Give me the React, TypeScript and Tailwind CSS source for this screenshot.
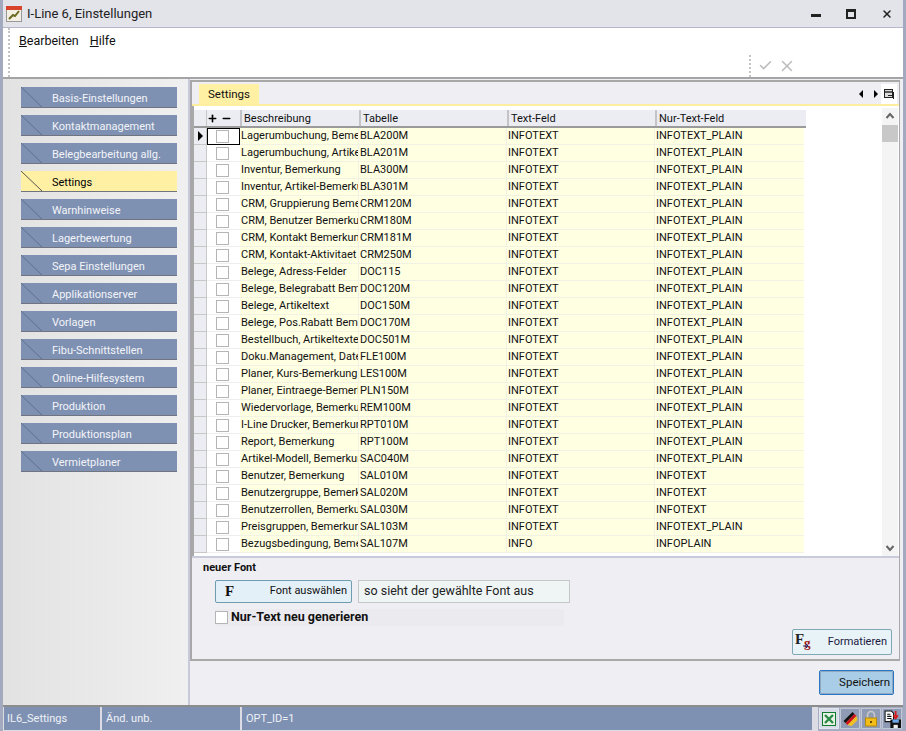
import { Check, Minus, Plus, X } from 'lucide-react'

const FONT = "font-['Roboto','Liberation_Sans',sans-serif]"

const NAV = [
  'Basis-Einstellungen',
  'Kontaktmanagement',
  'Belegbearbeitung allg.',
  'Settings',
  'Warnhinweise',
  'Lagerbewertung',
  'Sepa Einstellungen',
  'Applikationserver',
  'Vorlagen',
  'Fibu-Schnittstellen',
  'Online-Hilfesystem',
  'Produktion',
  'Produktionsplan',
  'Vermietplaner',
]

const ROWS: [string, string, string?, string?][] = [
  ['Lagerumbuchung, Bemerkung', 'BLA200M'],
  ['Lagerumbuchung, Artikeltext', 'BLA201M'],
  ['Inventur, Bemerkung', 'BLA300M'],
  ['Inventur, Artikel-Bemerkung', 'BLA301M'],
  ['CRM, Gruppierung Bemerkung', 'CRM120M'],
  ['CRM, Benutzer Bemerkung', 'CRM180M'],
  ['CRM, Kontakt Bemerkung', 'CRM181M'],
  ['CRM, Kontakt-Aktivitaet', 'CRM250M'],
  ['Belege, Adress-Felder', 'DOC115'],
  ['Belege, Belegrabatt Bemerkung', 'DOC120M'],
  ['Belege, Artikeltext', 'DOC150M'],
  ['Belege, Pos.Rabatt Bemerkung', 'DOC170M'],
  ['Bestellbuch, Artikeltexte', 'DOC501M'],
  ['Doku.Management, Datei', 'FLE100M'],
  ['Planer, Kurs-Bemerkung', 'LES100M'],
  ['Planer, Eintraege-Bemerkung', 'PLN150M'],
  ['Wiedervorlage, Bemerkung', 'REM100M'],
  ['I-Line Drucker, Bemerkung', 'RPT010M'],
  ['Report, Bemerkung', 'RPT100M'],
  ['Artikel-Modell, Bemerkung', 'SAC040M'],
  ['Benutzer, Bemerkung', 'SAL010M', 'INFOTEXT', 'INFOTEXT'],
  ['Benutzergruppe, Bemerkung', 'SAL020M', 'INFOTEXT', 'INFOTEXT'],
  ['Benutzerrollen, Bemerkung', 'SAL030M', 'INFOTEXT', 'INFOTEXT'],
  ['Preisgruppen, Bemerkung', 'SAL103M'],
  ['Bezugsbedingung, Bemerkung', 'SAL107M', 'INFO', 'INFOPLAIN'],
]

function NavButton({ label, active }: { label: string; active?: boolean }) {
  return (
    <div
      className={`relative h-[21px] w-[156px] border-b border-[#6f7480] pl-[31px] text-[11px] leading-[24px] ${
        active ? 'bg-[#fff0a4] text-black' : 'bg-[#7f91b3] text-[#f2f4f8]'
      }`}
    >
      <svg className="absolute left-0 top-0" width="21" height="20">
        <line x1="0" y1="0" x2="21" y2="20" stroke={active ? '#555' : '#5f6f90'} />
      </svg>
      {label}
    </div>
  )
}

function Row({ row, first }: { row: (typeof ROWS)[number]; first: boolean }) {
  const [name, table, text = 'INFOTEXT', plain = 'INFOTEXT_PLAIN'] = row
  return (
    <div className="flex h-[17px] text-[11px] leading-[16px] text-[#111]">
      <div className="flex w-[13px] shrink-0 items-center justify-center border-b border-r border-[#c8c8c8] bg-[#ecedf3]">
        {first && <div className="h-0 w-0 border-y-[5px] border-l-[5px] border-y-transparent border-l-black" />}
      </div>
      <div className={`flex w-[33px] shrink-0 items-center justify-center pr-[2px] bg-white ${first ? 'border border-black' : 'border-b border-[#eeeeee]'}`}>
        <div className="h-[13px] w-[13px] border border-[#b5b5b5] bg-white" />
      </div>
      <div className="w-[119px] shrink-0 overflow-hidden whitespace-nowrap border-b border-r border-[#f1f1e4] bg-[#ffffe2] pl-px">{name}</div>
      <div className="w-[148px] shrink-0 border-b border-r border-[#f1f1e4] bg-[#ffffe2] pl-px">{table}</div>
      <div className="w-[148px] shrink-0 border-b border-r border-[#f1f1e4] bg-[#ffffe2] pl-px">{text}</div>
      <div className="w-[149px] shrink-0 border-b border-[#f1f1e4] bg-[#ffffe2] pl-px">{plain}</div>
    </div>
  )
}

function HeadCell({ className, children }: { className: string; children: string }) {
  return <div className={`shrink-0 border-l-2 border-l-[#c4c4c8] pl-[2px] ${className}`}>{children}</div>
}

function Grid() {
  return (
    <div className="flex h-[450px] border-l-2 border-[#a8a8a8] bg-white pr-px pt-[4px]">
      <div className="w-[612px] shrink-0">
        <div className="flex h-[18px] border-b-2 border-[#9a9a9a] bg-[#ecedf3] text-[11px] leading-[17px] text-[#111]">
          <div className="w-[13px] shrink-0 border-r border-[#c8c8c8]" />
          <div className="flex w-[33px] shrink-0 items-center gap-[3px]">
            <Plus size={11} strokeWidth={3.5} className="text-black" />
            <Minus size={11} strokeWidth={3.5} className="text-black" />
          </div>
          <HeadCell className="w-[119px]">Beschreibung</HeadCell>
          <HeadCell className="w-[148px]">Tabelle</HeadCell>
          <HeadCell className="w-[148px]">Text-Feld</HeadCell>
          <HeadCell className="w-[149px]">Nur-Text-Feld</HeadCell>
        </div>
        {ROWS.map((r, i) => (
          <Row key={r[1]} row={r} first={i === 0} />
        ))}
      </div>
      <div className="flex-1" />
      <div className="-mt-[2px] flex w-[16px] shrink-0 flex-col items-center bg-[#f4f4f4] text-[#777]">
        <svg className="mt-[3px]" width="10" height="10" viewBox="0 0 10 10">
          <path d="M1.5 7 L5 3 L8.5 7" fill="none" stroke="#666" strokeWidth="2" />
        </svg>
        <div className="mt-[4px] h-[17px] w-full bg-[#c8c8c8]" />
        <div className="flex-1" />
        <svg className="mb-[3px]" width="10" height="10" viewBox="0 0 10 10">
          <path d="M1.5 3 L5 7 L8.5 3" fill="none" stroke="#666" strokeWidth="2" />
        </svg>
      </div>
    </div>
  )
}

function FormatIcon() {
  return (
    <svg width="22" height="20" viewBox="0 0 22 20">
      <text x="0" y="12" fontFamily="Liberation Serif" fontWeight="700" fontSize="15" fill="#222">F</text>
      <text x="9" y="15" fontFamily="Liberation Serif" fontWeight="700" fontSize="13" fill="#a01818">g</text>
      <path d="M8 14 h5 M11 12 l2 2 l-2 2" stroke="#26307a" fill="none" />
    </svg>
  )
}

function StatusIcons() {
  return (
    <div className="flex h-[24px] items-center gap-[1px] bg-[#a5aec4] px-[1px]">
      <span className="flex h-[21px] w-[20px] items-center justify-center border border-[#e4e6ee] bg-[#d8dce6]">
        <svg width="14" height="14" viewBox="0 0 14 14">
          <rect x="0.5" y="0.5" width="13" height="13" fill="#e8f3e6" stroke="#117a2e" />
          <path d="M3 3 L11 11 M11 3 L3 11" stroke="#2b8a45" strokeWidth="2.4" />
        </svg>
      </span>
      <span className="flex h-[21px] w-[20px] items-center justify-center border border-[#c2c7d6] bg-[#8f9ab4]">
        <svg width="17" height="16" viewBox="0 0 16 16">
          <path d="M1 10 L10 1 L12 3 L3 12 Z" fill="#111" />
          <path d="M3 12 L12 3 L14 5 L5 14 Z" fill="#d0121a" />
          <path d="M5 14 L14 5 L15 9 L9 15 Z" fill="#f4c020" />
        </svg>
      </span>
      <span className="flex h-[21px] w-[20px] items-center justify-center border border-[#c2c7d6] bg-[#8f9ab4]">
        <svg width="14" height="17" viewBox="0 0 14 17">
          <path d="M3.5 8 V5 a3.5 3.5 0 0 1 7 0 V8" fill="none" stroke="#c9c9c9" strokeWidth="1.6" />
          <rect x="1.5" y="8" width="11" height="8" fill="#f2bd16" stroke="#b98a08" />
          <rect x="6" y="11" width="2" height="2" fill="#6a4a00" />
        </svg>
      </span>
      <span className="flex h-[21px] w-[20px] items-center justify-center border border-[#c2c7d6] bg-[#8f9ab4]">
        <svg width="17" height="18" viewBox="0 0 16 17">
          <path d="M1 1 H7 L9 3 V11 H1 Z" fill="#fff" stroke="#111" />
          <path d="M3 4 H6 M3 6 H7 M3 8 H7" stroke="#111" />
          <path d="M11 1 V6 M9 5 L11 8 L13 5" stroke="#d81818" strokeWidth="1.6" fill="none" />
          <rect x="6" y="9" width="10" height="8" fill="#111" />
          <rect x="8" y="9" width="6" height="3" fill="#6fa8e8" />
          <rect x="9" y="14" width="4" height="3" fill="#eee" />
        </svg>
      </span>
    </div>
  )
}

export default function App() {
  return (
    <div className={`flex h-[731px] w-[906px] flex-col overflow-hidden border-x-[3px] border-x-[#a3a9bf] bg-[#eeeef3] ${FONT}`}>
      {/* title bar */}
      <div className="flex h-[28px] shrink-0 items-center border-b border-[#b4b8c8] bg-[#e3e3ea] text-[#222]">
        <svg className="ml-[3px]" width="16" height="16" viewBox="0 0 16 16">
          <rect x="0.5" y="0.5" width="15" height="15" fill="#f3efe2" stroke="#999" />
          <rect x="0" y="0" width="16" height="4" fill="#d8432c" />
          <path d="M3 13 L7 9 L9 10 L13 5" stroke="#6a6a20" strokeWidth="2" fill="none" />
        </svg>
        <span className="ml-[5px] text-[13px]">I-Line 6, Einstellungen</span>
        <div className="ml-auto flex items-center gap-[25px] pr-[10px]">
          <span className="mt-[3px] h-[3px] w-[10px] bg-[#222]" />
          <span className="h-[10px] w-[10px] border-2 border-t-[3px] border-[#222]" />
          <X size={12} strokeWidth={3} className="text-[#222]" />
        </div>
      </div>

      {/* menu + toolbar */}
      <div className="flex h-[51px] shrink-0 border-b-2 border-[#a4a4a4] bg-white pl-[5px]">
        <div className="h-full border-l-2 border-dotted border-[#c4c4c4] pl-[9px] pt-[4px] text-[12.5px] text-[#111]">
          <span><u>B</u>earbeiten</span>
          <span className="ml-[11px]"><u>H</u>ilfe</span>
        </div>
        <div className="ml-auto mr-[107px] mt-[27px] flex h-[22px] items-start gap-[5px] border-l-2 border-dotted border-[#c4c4c4] pl-[7px] pt-[3px] text-[#bcbcbc]">
          <Check size={15} strokeWidth={2.5} />
          <X size={18} strokeWidth={2} className="-mt-px" />
        </div>
      </div>

      {/* body */}
      <div className="flex min-h-0 flex-1">
        <div className="flex w-[185px] shrink-0 flex-col gap-[7px] bg-gradient-to-r from-[#e2e2e2] to-[#f0f0f0] pl-[18px] pt-[8px]">
          {NAV.map((n) => (
            <NavButton key={n} label={n} active={n === 'Settings'} />
          ))}
        </div>
        <div className="flex min-w-0 flex-1 flex-col border-l-2 border-[#c8cadb] pt-px">
          <div className="mr-[3px] flex h-[581px] flex-col border-2 border-r border-[#a8a8a8] bg-[#eeeef3]">
            <div className="flex h-[24px] shrink-0 items-end border-b-2 border-[#ffeea0] pl-[7px]">
              <div className="h-[20px] bg-[#fff0a4] px-[9px] text-[11.5px] leading-[20px] text-[#111]">Settings</div>
              <div className="ml-auto mr-[2px] flex h-[20px] items-center">
                <span className="h-0 w-0 border-y-[4px] border-r-[4px] border-y-transparent border-r-black" />
                <span className="ml-[11px] h-0 w-0 border-y-[4px] border-l-[4px] border-y-transparent border-l-black" />
                <span className="ml-[3px] flex h-[20px] w-[16px] items-center justify-center bg-white">
                  <svg width="10" height="10" viewBox="0 0 10 10">
                    <rect x="0.5" y="0.5" width="8" height="8" fill="#dcdcdc" stroke="#222" />
                    <path d="M1 3 H8" stroke="#222" strokeWidth="1.4" />
                    <path d="M4 6.5 H10 M9.5 3 V10" stroke="#222" />
                  </svg>
                </span>
              </div>
            </div>
            <Grid />
            <div className="flex min-h-0 flex-1 flex-col border-t-2 border-[#c9cbdb] bg-[#eeeef3] pl-[11px] pr-[7px] pt-[3px] text-[11.5px] text-[#111]">
              <div className="h-[14px] text-[11px] font-bold leading-[14px]">neuer Font</div>
              <div className="ml-[12px] mt-[5px] flex h-[23px] gap-[6px]">
                <div className="flex w-[137px] items-center justify-between rounded-[2px] border border-[#6f9cae] bg-[#e4f0f7] pl-[9px] pr-[4px] text-[11px]">
                  <span className="font-['Liberation_Serif',serif] text-[15px] font-bold">F</span>
                  <span>Font auswählen</span>
                </div>
                <div className="flex w-[212px] items-center border border-[#c4c8c8] bg-[#eff5f5] pl-[5px] text-[12.5px] text-[#222]">so sieht der gewählte Font aus</div>
              </div>
              <div className="ml-[12px] mt-[6px] flex h-[17px] w-[349px] items-center gap-[3px] bg-[#ebebef] text-[12.5px] font-bold">
                <span className="h-[13px] w-[13px] border border-[#b5b5b5] bg-white" />
                Nur-Text neu generieren
              </div>
              <div className="ml-auto mt-[3px] flex h-[26px] w-[100px] items-center justify-between rounded-[2px] border border-[#7fa8b4] bg-[#e8f3f8] pl-[2px] pr-[4px] text-[11px] text-[#1a1a40]">
                <FormatIcon />
                <span>Formatieren</span>
              </div>
            </div>
          </div>
          <div className="flex min-h-0 flex-1 items-start justify-end pr-[9px] pt-[9px]">
            <div className="h-[25px] w-[75px] rounded-[2px] border border-[#2a76c4] bg-[#a9cde6] pr-[3px] text-right text-[11.5px] leading-[22px] text-[#111] outline outline-1 -outline-offset-2 outline-[#8fa9c0]">
              Speichern
            </div>
          </div>
        </div>
      </div>

      {/* status bar */}
      <div className="flex h-[26px] shrink-0 items-center gap-[2px] border-t-2 border-[#8c8c8c] bg-[#dcdde4] pb-px pl-px text-[11px] text-[#eef1f6]">
        <div className="h-[23px] w-[96px] bg-[#7f91b3] pl-[3px] leading-[24px]">IL6_Settings</div>
        <div className="h-[23px] w-[138px] bg-[#7f91b3] pl-[4px] leading-[24px]">Änd. unb.</div>
        <div className="h-[23px] w-[570px] bg-[#7f91b3] pl-[4px] leading-[24px]">OPT_ID=1</div>
        <div className="ml-auto">
          <StatusIcons />
        </div>
      </div>
    </div>
  )
}
